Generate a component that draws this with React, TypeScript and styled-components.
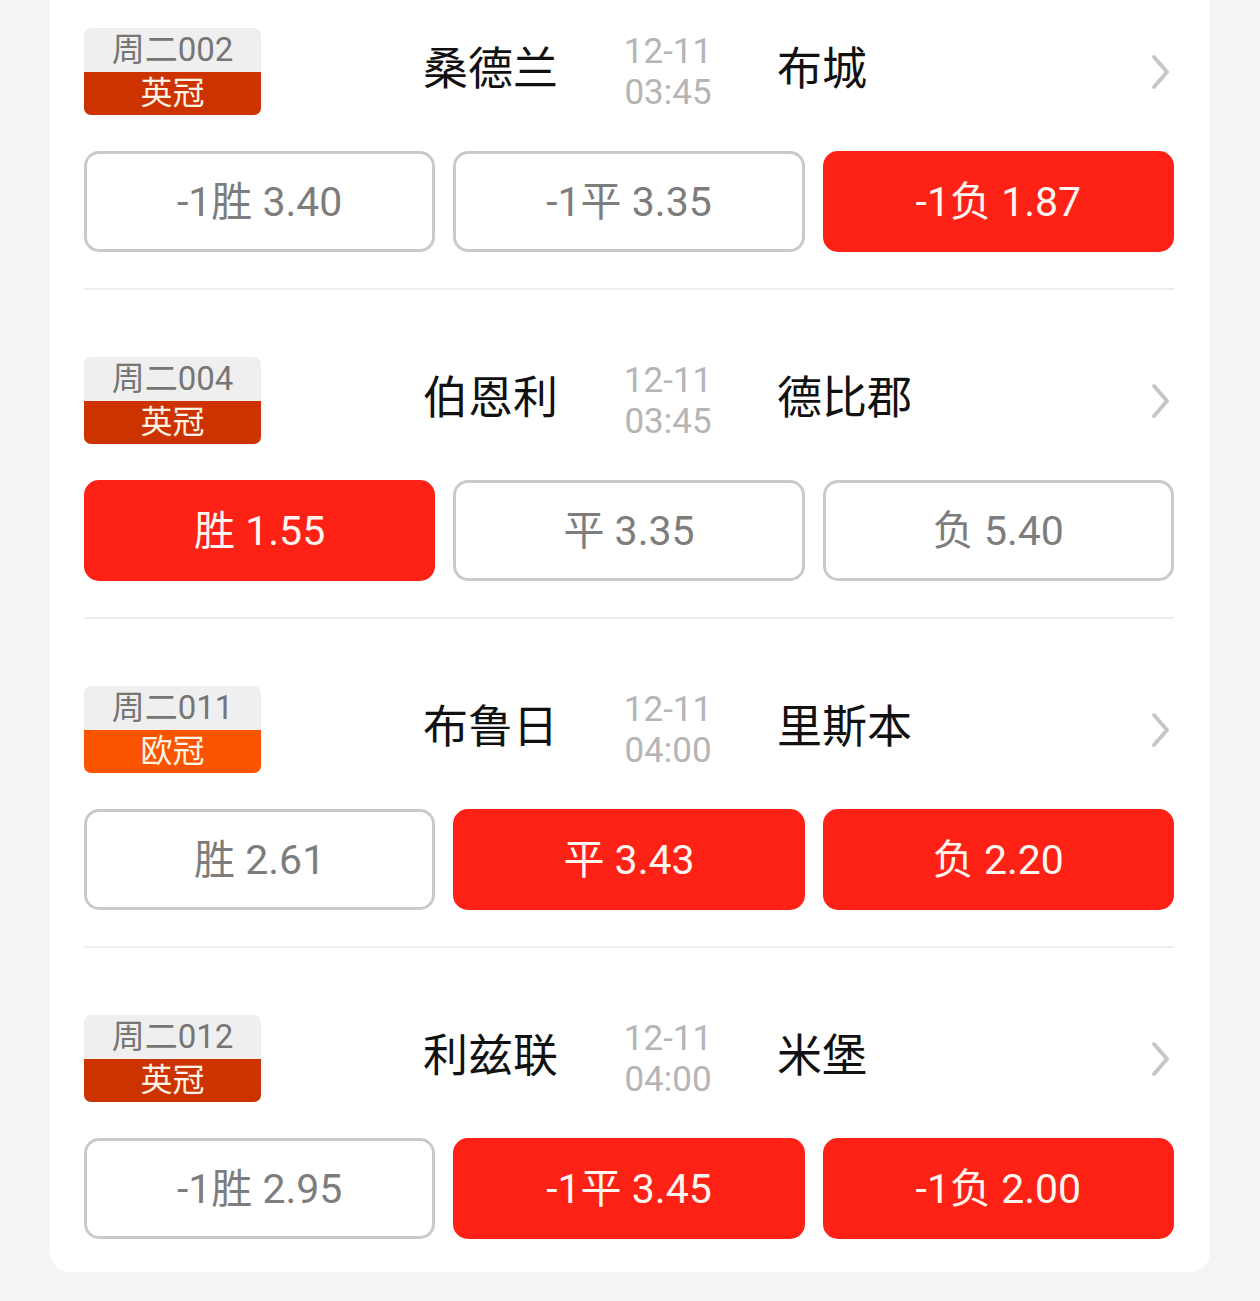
import React from 'react';
import styled, { createGlobalStyle } from 'styled-components';

const GlobalStyle = createGlobalStyle`
  html, body {
    margin: 0;
    padding: 0;
    background: #f5f5f5;
    font-family: Roboto, "Noto Sans CJK SC", sans-serif;
  }
`;

const Card = styled.div`
  margin-left: 50px;
  width: 1160px;
  box-sizing: border-box;
  padding: 28px 36px 33px 34px;
  background: #ffffff;
  border-radius: 0 0 20px 20px;
`;

const Match = styled.div`
  display: flex;
  flex-direction: column;
`;

const Header = styled.div`
  display: flex;
  align-items: center;
  height: 87px;
`;

const Tag = styled.div`
  width: 177px;
  height: 87px;
  border-radius: 7px;
  overflow: hidden;
  display: flex;
  flex-direction: column;
`;

const TagNo = styled.div`
  height: 44px;
  background: #efefef;
  color: #767676;
  font-size: 33px;
  line-height: 44px;
  text-align: center;
`;

const TagLeague = styled.div<{ $color: string }>`
  height: 43px;
  background: ${(p) => p.$color};
  color: #fff4e6;
  font-size: 32px;
  line-height: 43px;
  text-align: center;
`;

const Team = styled.div<{ $away?: boolean }>`
  margin-left: ${(p) => (p.$away ? '39px' : '162px')};
  width: ${(p) => (p.$away ? 'auto' : '175px')};
  flex: ${(p) => (p.$away ? '1' : 'none')};
  font-size: 45px;
  line-height: 50px;
  color: #111111;
  white-space: nowrap;
  padding-bottom: 4px;
`;

const Time = styled.div`
  width: 140px;
  text-align: center;
  color: #b5b5b5;
  font-size: 35px;
  line-height: 41px;
`;

const Chevron = styled.svg`
  width: 24px;
  height: 40px;
  margin-right: 2px;
`;

const Odds = styled.div`
  display: grid;
  grid-template-columns: repeat(3, 1fr);
  gap: 18px;
  margin-top: 36px;
`;

const OddButton = styled.div<{ $active?: boolean }>`
  height: 101px;
  box-sizing: border-box;
  padding-bottom: 7px;
  border-radius: 15px;
  border: 3px solid ${(p) => (p.$active ? '#fe2116' : '#cacaca')};
  background: ${(p) => (p.$active ? '#fe2116' : '#ffffff')};
  color: ${(p) => (p.$active ? '#fff6f0' : '#7d7d7d')};
  font-size: 41px;
  display: flex;
  align-items: center;
  justify-content: center;
`;

const Divider = styled.div`
  height: 2px;
  background: #eeeeee;
  margin: 36px 0 67px;
`;

type Odd = { label: string; value: string; active?: boolean };

type MatchData = {
  no: string;
  league: string;
  leagueColor: string;
  home: string;
  away: string;
  date: string;
  time: string;
  odds: Odd[];
};

const matches: MatchData[] = [
  {
    no: '周二002',
    league: '英冠',
    leagueColor: '#cc3300',
    home: '桑德兰',
    away: '布城',
    date: '12-11',
    time: '03:45',
    odds: [
      { label: '-1胜', value: '3.40' },
      { label: '-1平', value: '3.35' },
      { label: '-1负', value: '1.87', active: true },
    ],
  },
  {
    no: '周二004',
    league: '英冠',
    leagueColor: '#cc3300',
    home: '伯恩利',
    away: '德比郡',
    date: '12-11',
    time: '03:45',
    odds: [
      { label: '胜', value: '1.55', active: true },
      { label: '平', value: '3.35' },
      { label: '负', value: '5.40' },
    ],
  },
  {
    no: '周二011',
    league: '欧冠',
    leagueColor: '#fa5400',
    home: '布鲁日',
    away: '里斯本',
    date: '12-11',
    time: '04:00',
    odds: [
      { label: '胜', value: '2.61' },
      { label: '平', value: '3.43', active: true },
      { label: '负', value: '2.20', active: true },
    ],
  },
  {
    no: '周二012',
    league: '英冠',
    leagueColor: '#cc3300',
    home: '利兹联',
    away: '米堡',
    date: '12-11',
    time: '04:00',
    odds: [
      { label: '-1胜', value: '2.95' },
      { label: '-1平', value: '3.45', active: true },
      { label: '-1负', value: '2.00', active: true },
    ],
  },
];

const App: React.FC = () => {
  return (
    <>
      <GlobalStyle />
      <Card>
        {matches.map((m, i) => (
          <Match key={m.no}>
            <Header>
              <Tag>
                <TagNo>{m.no}</TagNo>
                <TagLeague $color={m.leagueColor}>{m.league}</TagLeague>
              </Tag>
              <Team>{m.home}</Team>
              <Time>
                <div>{m.date}</div>
                <div>{m.time}</div>
              </Time>
              <Team $away>{m.away}</Team>
              <Chevron viewBox="0 0 24 40">
                <path
                  d="M6 5 L19 20 L6 35"
                  fill="none"
                  stroke="#c6c6c6"
                  strokeWidth="4"
                  strokeLinecap="round"
                  strokeLinejoin="round"
                />
              </Chevron>
            </Header>
            <Odds>
              {m.odds.map((o) => (
                <OddButton key={o.label} $active={o.active}>
                  {o.label} {o.value}
                </OddButton>
              ))}
            </Odds>
            {i < matches.length - 1 && <Divider />}
          </Match>
        ))}
      </Card>
    </>
  );
};

export default App;
